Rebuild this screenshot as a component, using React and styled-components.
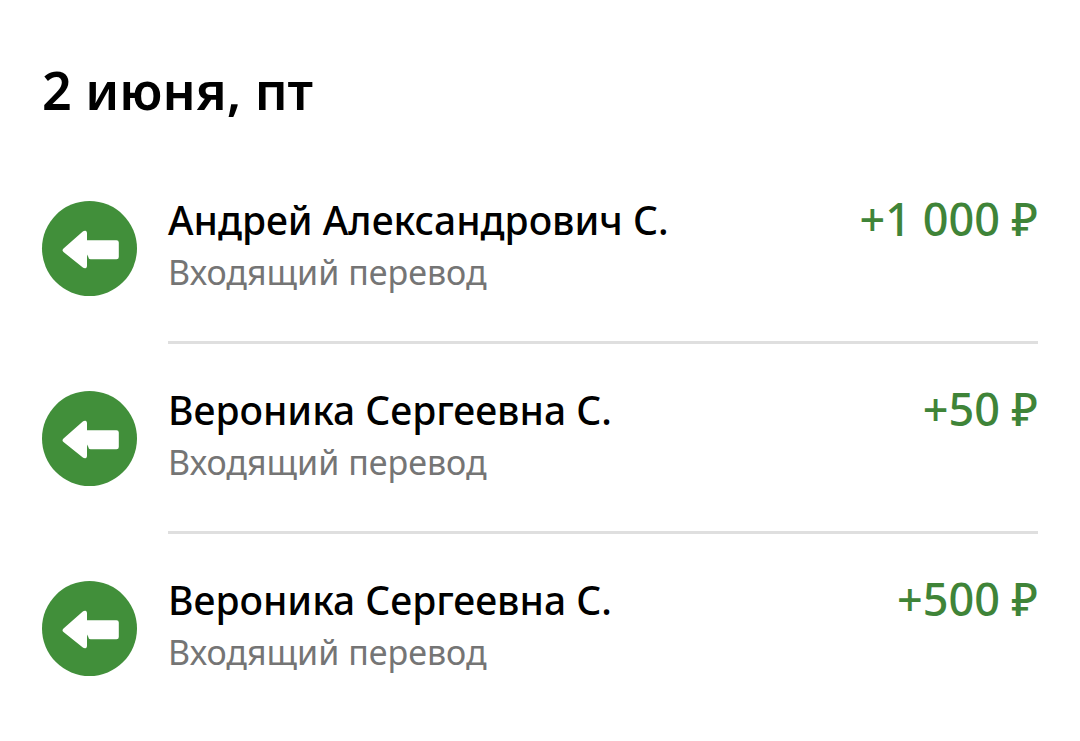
import React from 'react'
import styled, { createGlobalStyle } from 'styled-components'

const GlobalStyle = createGlobalStyle`
*{
  box-sizing: border-box;
}
body{
  margin: 0;
  background-color: #fff;
  font-family: "Noto Sans", "Open Sans", sans-serif;
}
`

const Page = styled.main`
padding: 56px 42px 0;
`

const Title = styled.h2`
margin: 0 0 30px;
color: #000;
font-size: 52px;
font-weight: 600;
line-height: 68px;
`

const List = styled.ul`
margin: 0;
padding: 0;
list-style: none;
`

const Item = styled.li`
display: flex;
gap: 31px;
`

const IconCircle = styled.div`
display: flex;
flex-shrink: 0;
width: 95px;
height: 95px;
margin-top: 47px;
border-radius: 50%;
background-color: #418f3a;
`

const Body = styled.div`
display: flex;
flex: 1;
justify-content: space-between;
padding: 36px 0 47px;
border-bottom: ${props => props.$last ? 'none' : '3px solid #dfdfdf'};
`

const Name = styled.div`
color: #000;
font-size: 39px;
font-weight: 500;
line-height: 60px;
`

const Note = styled.div`
color: #757575;
font-size: 34px;
line-height: 44px;
`

const Amount = styled.div`
color: #3f8438;
font-size: 45px;
font-weight: 500;
line-height: 58px;
white-space: nowrap;
`

const operations = [
  { id: 1, name: 'Андрей Александрович С.', note: 'Входящий перевод', amount: '+1 000 ₽' },
  { id: 2, name: 'Вероника Сергеевна С.', note: 'Входящий перевод', amount: '+50 ₽' },
  { id: 3, name: 'Вероника Сергеевна С.', note: 'Входящий перевод', amount: '+500 ₽' },
]

const ArrowIcon = () => (
  <svg width="95" height="95" viewBox="0 0 95 95" aria-hidden="true">
    <path
      fill="#fff"
      d="M21.500 47.500 L40.500 30.700 Q42 29.500 43.500 29.700 Q45 30 45 32 V39.300 H74.500 Q76.800 39.300 76.800 41.600 V56 Q76.800 58.300 74.500 58.300 H48.500 Q46.500 58.300 46.300 56 L45.500 53.500 L45 56 V65 Q45 67 43.500 67.300 Q42 67.500 40.500 66.300 L21.500 51 Q19.500 49.300 21.500 47.500 Z"
    />
  </svg>
)

export default function App() {
  return (
    <>
      <GlobalStyle />
      <Page>
        <Title>2 июня, пт</Title>
        <List>
          {operations.map((item, index) => (
            <Item key={item.id}>
              <IconCircle><ArrowIcon /></IconCircle>
              <Body $last={index === operations.length - 1}>
                <div>
                  <Name>{item.name}</Name>
                  <Note>{item.note}</Note>
                </div>
                <Amount>{item.amount}</Amount>
              </Body>
            </Item>
          ))}
        </List>
      </Page>
    </>
  )
}
